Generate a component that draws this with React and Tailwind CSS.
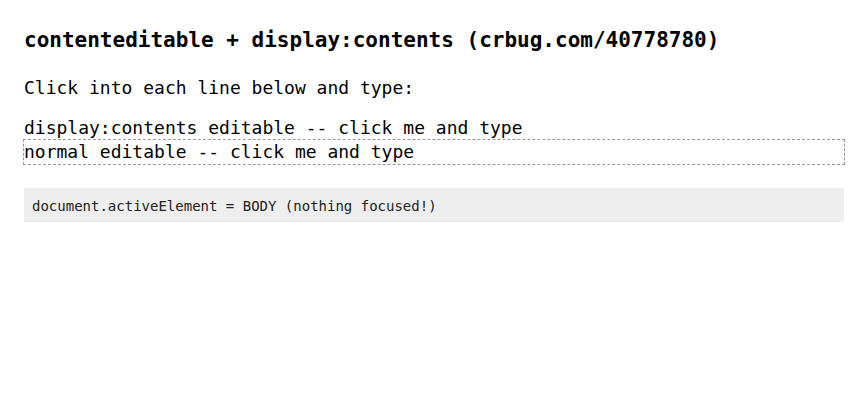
export default function App() {
  return (
    <div className="min-h-screen bg-white p-6 font-['DejaVu_Sans_Mono',monospace] text-[18px] leading-[24px] text-black">
      <h1 className="text-[21px] font-bold leading-[32px]">
        contenteditable + display:contents (crbug.com/40778780)
      </h1>
      <p className="mt-5">Click into each line below and type:</p>
      <div className="mt-4">
        <div>display:contents editable -- click me and type</div>
        <div
          contentEditable
          suppressContentEditableWarning
          className="outline outline-1 outline-dashed outline-[#999]"
        >
          normal editable -- click me and type
        </div>
      </div>
      <div className="mt-6 bg-[#eeeeee] px-2 pt-[9px] pb-[7px] text-[14px] leading-[18px] text-[#222]">
        document.activeElement = BODY (nothing focused!)
      </div>
    </div>
  );
}
